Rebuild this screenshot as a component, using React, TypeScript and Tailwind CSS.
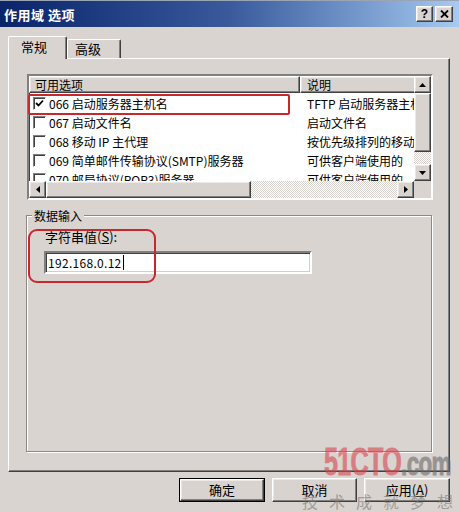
import React from "react";

const F = "font-['SimSun','Noto_Sans_CJK_SC',sans-serif]";
const raised =
  "bg-[#d9d3d0] border border-t-white border-l-white border-r-[#404040] border-b-[#404040] shadow-[inset_-1px_-1px_0_#808080,inset_1px_1px_0_#ece8e6]";
const sunken =
  "border-2 border-t-[#808080] border-l-[#808080] border-r-white border-b-white shadow-[inset_1px_1px_0_#404040,inset_-1px_-1px_0_#d4d0c8]";
const track =
  "bg-[repeating-conic-gradient(#ffffff_0_25%,#d9d3d0_0_50%)] bg-[length:2px_2px]";

function Tri({ dir }: { dir: "up" | "down" | "left" | "right" }) {
  const pts =
    dir === "up"
      ? "0,4 3.5,0 7,4"
      : dir === "down"
      ? "0,0 7,0 3.5,4"
      : dir === "left"
      ? "4,0 4,7 0,3.5"
      : "0,0 0,7 4,3.5";
  const w = dir === "up" || dir === "down" ? 7 : 4;
  const h = dir === "up" || dir === "down" ? 4 : 7;
  return (
    <svg width={w} height={h} viewBox={`0 0 ${w} ${h}`}>
      <polygon points={pts} fill="#000" />
    </svg>
  );
}

function Check({ checked }: { checked?: boolean }) {
  return (
    <div className="w-[13px] h-[13px] bg-white border border-t-[#808080] border-l-[#808080] border-r-white border-b-white shadow-[inset_1px_1px_0_#404040] flex items-center justify-center shrink-0">
      {checked && (
        <svg width="9" height="9" viewBox="0 0 9 9">
          <path d="M1 4 L3.5 6.5 L8 1.5" stroke="#000" strokeWidth="1.8" fill="none" />
        </svg>
      )}
    </div>
  );
}

const rows = [
  { c: true, a: "066 启动服务器主机名", b: "TFTP 启动服务器主机名" },
  { c: false, a: "067 启动文件名", b: "启动文件名" },
  { c: false, a: "068 移动 IP 主代理", b: "按优先级排列的移动" },
  { c: false, a: "069 简单邮件传输协议(SMTP)服务器", b: "可供客户端使用的" },
  { c: false, a: "070 邮局协议(POP3)服务器", b: "可供客户端使用的" },
];

export default function App() {
  return (
    <div
      className={`relative w-[459px] h-[512px] overflow-hidden bg-[#dad4d1] flex flex-col text-[12px] text-black ${F}`}
    >
      {/* title bar */}
      <div className="h-[27px] shrink-0 flex items-center pl-[4px] pr-[6px] bg-gradient-to-r from-[#0a246a] via-[#3a5a9c] to-[#a6caf0] border-t border-[#9aa4b4]">
        <span className="text-white font-bold text-[13px] tracking-[0.5px] flex-1 mt-[1px]">
          作用域 选项
        </span>
        <div className={`${raised} w-[17px] h-[16px] flex items-center justify-center font-bold text-[12px] font-['Liberation_Sans',sans-serif] leading-none`}>
          ?
        </div>
        <div className={`${raised} ml-[2px] w-[18px] h-[16px] flex items-center justify-center`}>
          <svg width="9" height="8" viewBox="0 0 9 8">
            <path d="M1 0.5 L8 7.5 M8 0.5 L1 7.5" stroke="#000" strokeWidth="1.8" />
          </svg>
        </div>
      </div>

      <div className="shrink-0 pl-[8px] pt-[9px]">
        {/* tabs */}
        <div className="h-[22px] flex items-end relative z-10">
          <div className="w-[59px] h-[23px] -mb-[1px] bg-[#dad4d1] border border-b-0 border-t-white border-l-white border-r-[#404040] rounded-t-[2px] shadow-[inset_-1px_0_0_#808080] flex items-center pl-[12px] pb-[2px] text-[13px]">
            常规
          </div>
          <div className="w-[54px] h-[19px] bg-[#dad4d1] border border-b-0 border-t-white border-l-white border-r-[#404040] rounded-t-[2px] shadow-[inset_-1px_0_0_#808080] flex items-center pl-[7px] text-[13px]">
            高级
          </div>
        </div>

        {/* panel */}
        <div className="w-[442px] h-[414px] border border-t-white border-l-white border-r-[#404040] border-b-[#404040] shadow-[inset_-1px_-1px_0_#808080] pl-[18px] pt-[15px]">
          {/* list */}
          <div className="relative w-[406px] h-[126px]">
            <div className={`${sunken} w-full h-full bg-white grid grid-cols-[385px_17px] grid-rows-[105px_17px] overflow-hidden`}>
              <div className="overflow-hidden relative">
                <div className="flex h-[17px]">
                  <div className={`${raised} w-[271px] shrink-0 pl-[5px] flex items-center leading-none`}>可用选项</div>
                  <div className={`${raised} w-[200px] shrink-0 pl-[6px] flex items-center leading-none`}>说明</div>
                </div>
                <div className="pt-[1px]">
                  {rows.map((r, i) => (
                    <div key={i} className="flex h-[19px] items-center whitespace-nowrap">
                      <div className="w-[271px] shrink-0 flex items-center pl-[4px] gap-[3px]">
                        <Check checked={r.c} />
                        <span>{r.a}</span>
                      </div>
                      <div className="pl-[7px]">{r.b}</div>
                    </div>
                  ))}
                </div>
              </div>
              {/* vertical scrollbar */}
              <div className="flex flex-col">
                <div className={`${raised} h-[17px] shrink-0 flex items-center justify-center`}><Tri dir="up" /></div>
                <div className={`${raised} h-[59px] shrink-0`} />
                <div className={`${track} flex-1`} />
                <div className={`${raised} h-[17px] shrink-0 flex items-center justify-center`}><Tri dir="down" /></div>
              </div>
              {/* horizontal scrollbar */}
              <div className="flex">
                <div className={`${raised} w-[17px] shrink-0 flex items-center justify-center`}><Tri dir="left" /></div>
                <div className={`${raised} w-[205px] shrink-0`} />
                <div className={`${track} flex-1`} />
                <div className={`${raised} w-[17px] shrink-0 flex items-center justify-center`}><Tri dir="right" /></div>
              </div>
              <div className="bg-[#dad4d1]" />
            </div>
            <div className="absolute left-[1px] top-[20px] w-[262px] h-[21px] border-2 border-[#c9262e] rounded-[2px]" />
          </div>

          {/* group box */}
          <div className="relative -ml-[1px] mt-[15px] w-[406px] h-[237px] border border-[#8c8886] shadow-[1px_1px_0_#ffffff,inset_1px_1px_0_#ffffff] pl-[17px] pt-[13px]">
            <div className="absolute -top-[8px] left-[5px] bg-[#dad4d1] px-[2px] leading-[15px]">数据输入</div>
            <div className="leading-[16px] pl-[1px] text-[13px]">
              字符串值(<span className="underline">S</span>):
            </div>
            <div className={`${sunken} mt-[6px] w-[268px] h-[23px] bg-white flex items-center pl-[2px] font-['SimSun','Noto_Sans_CJK_SC',monospace] text-[12px]`}>
              <span className="tracking-[0.3px]">192.168.0.12</span>
              <span className="w-[1px] h-[15px] bg-black ml-[1px]" />
            </div>
            <div className="absolute left-[1px] top-[13px] w-[128px] h-[54px] border-2 border-[#c9262e] rounded-[9px]" />
          </div>
        </div>
      </div>

      {/* buttons */}
      <div className="shrink-0 mt-[6px] flex justify-end pr-[9px] gap-[7px]">
        <div className="w-[86px] h-[24px] border border-black">
          <div className={`${raised} w-full h-full flex items-center justify-center text-[13px]`}>确定</div>
        </div>
        <div className={`${raised} w-[85px] h-[24px] flex items-center justify-center text-[13px]`}>取消</div>
        <div className={`${raised} w-[86px] h-[24px] flex items-center justify-center text-[13px]`}>
          应用(<span className="underline">A</span>)
        </div>
      </div>

      {/* watermark */}
      <div className="absolute left-[324px] top-[443px] flex items-baseline leading-none pointer-events-none font-['Liberation_Sans',sans-serif] font-black text-[38px] tracking-[-1px] scale-x-[0.66] origin-left whitespace-nowrap [-webkit-text-stroke:1px_currentColor]">
        <span className="text-[#d64650] opacity-60">51CTO</span>
        <span className="text-[#6a6a6a] opacity-60 text-[34px]">.com</span>
      </div>
      <div className="absolute left-[302px] top-[489px] text-[16px] tracking-[11px] text-[#7a7a7a] opacity-60 pointer-events-none whitespace-nowrap">
        技术成就梦想
      </div>
    </div>
  );
}
